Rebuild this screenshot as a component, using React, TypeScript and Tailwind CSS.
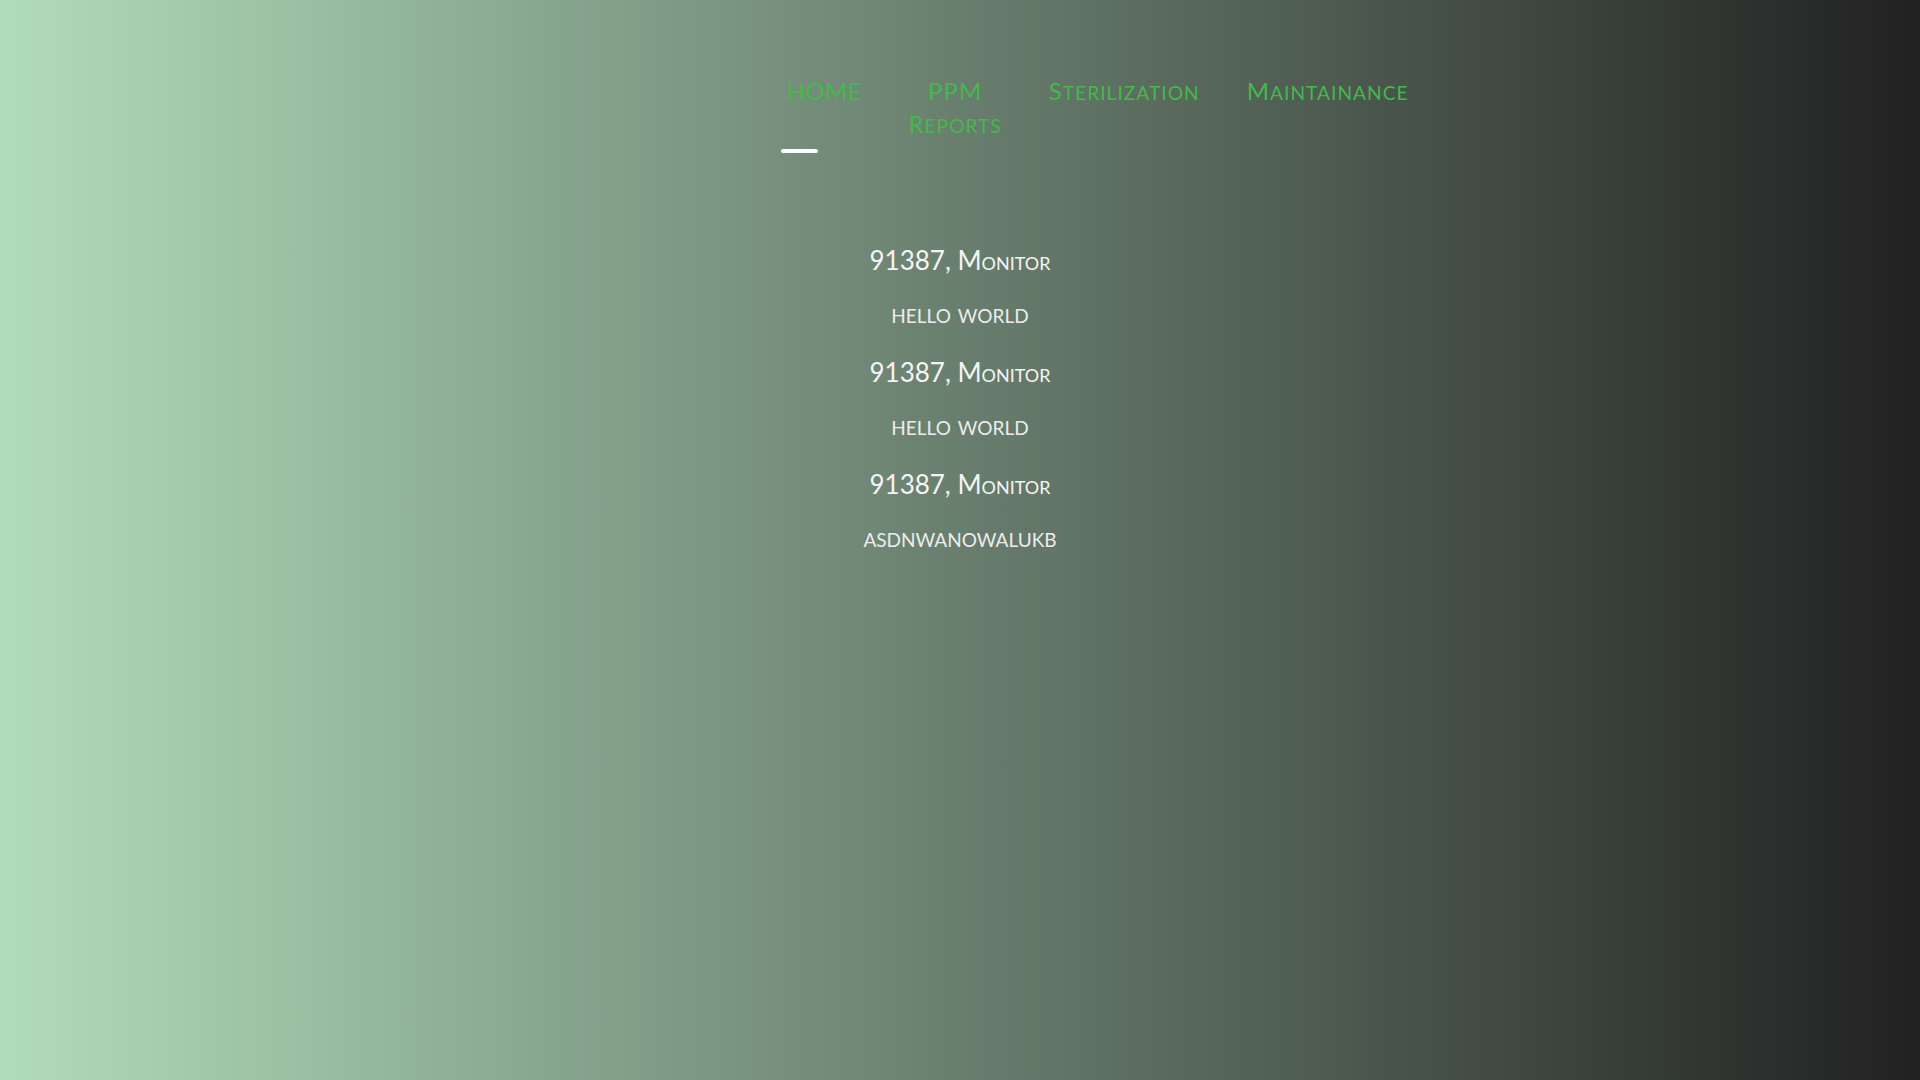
import React from "react";

const items = [
  { label: "HOME", active: true },
  { label: "PPM", sub: "Reports" },
  { label: "Sterilization" },
  { label: "Maintainance" },
];

const entries = [
  { title: "91387, Monitor", body: "hello world" },
  { title: "91387, Monitor", body: "hello world" },
  { title: "91387, Monitor", body: "asdnwanowalukb" },
];

// hand rolled small caps, lowercase letters drawn as smaller capitals
function SmallCaps({ text }: { text: string }) {
  const runs = text.match(/[a-z]+|[^a-z]+/g) || [];
  return (
    <>
      {runs.map((r, i) =>
        /[a-z]/.test(r[0]) ? (
          <span key={i} className="text-[0.8em] uppercase">
            {r}
          </span>
        ) : (
          <span key={i}>{r}</span>
        )
      )}
    </>
  );
}

export default function App() {
  return (
    <div className="min-h-screen w-full bg-[linear-gradient(to_right,#b1dcbb,#212121)] font-['Lato',sans-serif]">
      {/* NAV */}
      <nav className="flex pl-[787px] pt-[74px]">
        <ul className="flex items-start gap-[47px] text-[24px] leading-[33px] tracking-[1px] text-[#45b84d]">
          {items.map((it) => (
            <li key={it.label} className="relative text-center">
              <span className={it.active ? "block tracking-[0.2px]" : "block"}>
                <SmallCaps text={it.label} />
              </span>
              {it.sub && (
                <span className="block">
                  <SmallCaps text={it.sub} />
                </span>
              )}
              {it.active && (
                <div className="absolute left-[-6px] top-[75px] h-[4px] w-[37px] rounded-full bg-white" />
              )}
            </li>
          ))}
        </ul>
      </nav>

      {/* LIST */}
      <div className="mt-[100px] flex flex-col items-center [font-variant:small-caps]">
        {entries.map((e, i) => (
          <div key={i} className="flex flex-col items-center">
            <h2 className="text-[26px] leading-[36px] text-[#f4f4f4]">{e.title}</h2>
            <p className="mt-[17px] mb-[23px] text-[27px] leading-[36px] text-[#ececec]">{e.body}</p>
          </div>
        ))}
      </div>
    </div>
  );
}
